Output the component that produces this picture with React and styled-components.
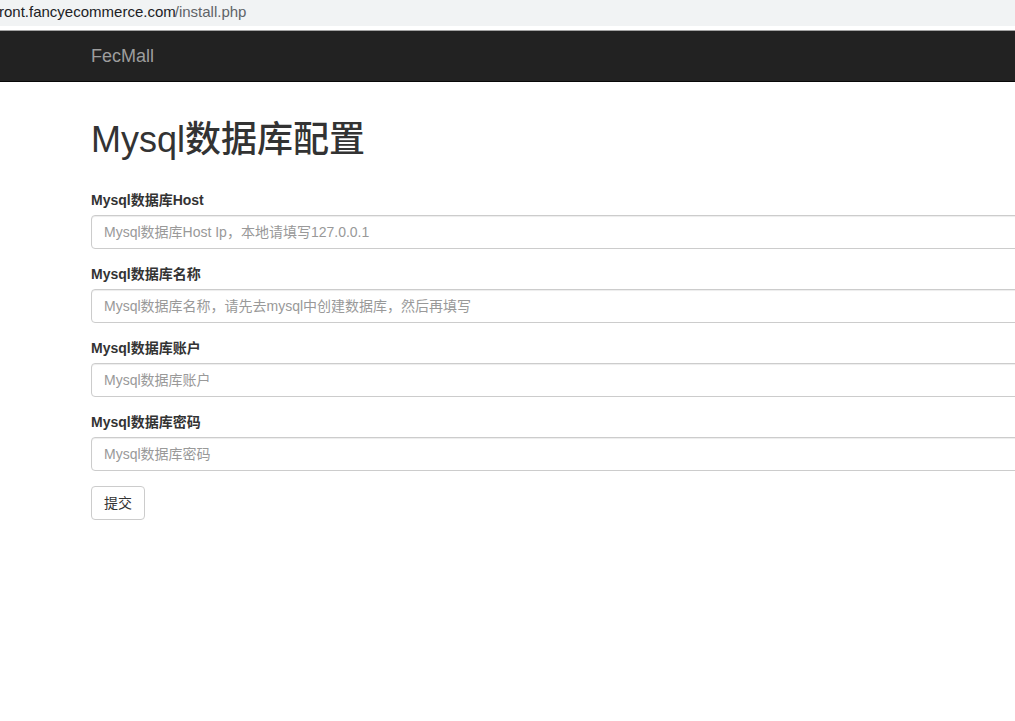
import React from "react";
import styled, { createGlobalStyle } from "styled-components";

const GlobalStyle = createGlobalStyle`
  html, body {
    margin: 0;
    padding: 0;
    background: #fff;
    overflow: hidden;
  }
  body {
    font-family: "Liberation Sans", Arial, "Noto Sans CJK SC", sans-serif;
    font-size: 14px;
    line-height: 1.42857143;
    color: #333;
  }
  * { box-sizing: border-box; }
`;

const Page = styled.div`
  width: 1015px;
  height: 721px;
  overflow: hidden;
  background: #fff;
`;

const AddressBar = styled.div`
  height: 26px;
  background: #f1f3f4;
  display: flex;
  align-items: center;
  padding-left: 0;
  font-family: "Liberation Sans", Arial, sans-serif;
  font-size: 15px;
  white-space: nowrap;
  overflow: hidden;
`;

const UrlText = styled.span`
  margin-left: -1px;
  margin-top: -2px;
  color: ${(p) => (p.$muted ? "#5f6368" : "#202124")};
`;

const Gap = styled.div`
  height: 4px;
  background: #fff;
`;

const Navbar = styled.nav`
  height: 52px;
  background: #222;
  border-top: 1px solid #a3a3a3;
  border-bottom: 1px solid #080808;
  display: flex;
  align-items: center;
  padding-left: 91px;
`;

const Brand = styled.a`
  font-family: "Liberation Sans", Arial, sans-serif;
  font-size: 18px;
  line-height: 20px;
  color: #9d9d9d;
  text-decoration: none;
  margin-top: 0;
`;

const Container = styled.main`
  padding-left: 91px;
  width: 1240px;
`;

const Title = styled.h1`
  margin: 38px 0 30px;
  font-size: 36px;
  line-height: 1.1;
  font-weight: 500;
  color: #333;
  font-family: "Liberation Sans", Arial, "Noto Sans CJK SC", sans-serif;
`;

const FormGroup = styled.div`
  margin-bottom: 15px;
`;

const Label = styled.label`
  display: inline-block;
  margin-bottom: 5px;
  font-weight: 700;
  font-size: 14px;
  line-height: 20px;
  color: #333;
`;

const Input = styled.input`
  display: block;
  width: 1140px;
  height: 34px;
  padding: 6px 12px;
  font-family: "Liberation Sans", Arial, "Noto Sans CJK SC", sans-serif;
  font-size: 14px;
  line-height: 1.42857143;
  color: #555;
  background: #fff;
  border: 1px solid #ccc;
  border-radius: 4px;
  box-shadow: inset 0 1px 1px rgba(0, 0, 0, 0.075);
  outline: none;
  &::placeholder {
    color: #999;
    opacity: 1;
  }
`;

const Button = styled.button`
  display: inline-block;
  height: 34px;
  padding: 6px 12px;
  font-family: "Liberation Sans", Arial, "Noto Sans CJK SC", sans-serif;
  font-size: 14px;
  line-height: 20px;
  color: #333;
  background: #fff;
  border: 1px solid #ccc;
  border-radius: 4px;
  cursor: pointer;
`;

const fields = [
  { label: "Mysql数据库Host", placeholder: "Mysql数据库Host Ip，本地请填写127.0.0.1" },
  { label: "Mysql数据库名称", placeholder: "Mysql数据库名称，请先去mysql中创建数据库，然后再填写" },
  { label: "Mysql数据库账户", placeholder: "Mysql数据库账户" },
  { label: "Mysql数据库密码", placeholder: "Mysql数据库密码" },
];

export default function App() {
  return (
    <Page>
      <GlobalStyle />
      <AddressBar>
        <UrlText>ront.fancyecommerce.com</UrlText>
        <UrlText $muted>/install.php</UrlText>
      </AddressBar>
      <Gap />
      <Navbar>
        <Brand href="#">FecMall</Brand>
      </Navbar>
      <Container>
        <Title>Mysql数据库配置</Title>
        <form onSubmit={(e) => e.preventDefault()}>
          {fields.map((f) => (
            <FormGroup key={f.label}>
              <Label>{f.label}</Label>
              <Input type="text" placeholder={f.placeholder} />
            </FormGroup>
          ))}
          <Button type="submit">提交</Button>
        </form>
      </Container>
    </Page>
  );
}
